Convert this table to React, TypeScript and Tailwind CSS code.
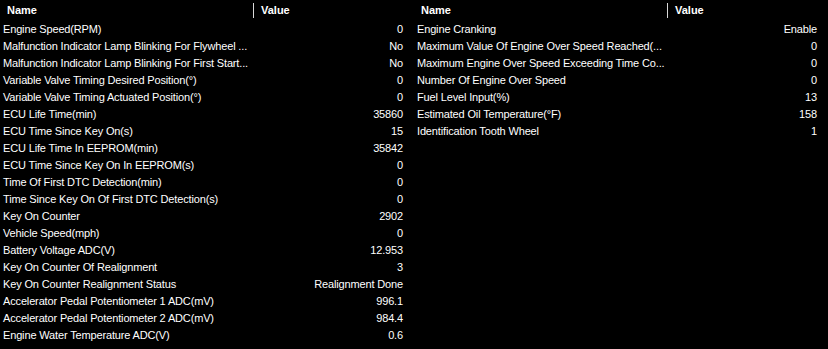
const leftRows: [string, string][] = [
  ["Engine Speed(RPM)", "0"],
  ["Malfunction Indicator Lamp Blinking For Flywheel ...", "No"],
  ["Malfunction Indicator Lamp Blinking For First Start...", "No"],
  ["Variable Valve Timing Desired Position(°)", "0"],
  ["Variable Valve Timing Actuated Position(°)", "0"],
  ["ECU Life Time(min)", "35860"],
  ["ECU Time Since Key On(s)", "15"],
  ["ECU Life Time In EEPROM(min)", "35842"],
  ["ECU Time Since Key On In EEPROM(s)", "0"],
  ["Time Of First DTC Detection(min)", "0"],
  ["Time Since Key On Of First DTC Detection(s)", "0"],
  ["Key On Counter", "2902"],
  ["Vehicle Speed(mph)", "0"],
  ["Battery Voltage ADC(V)", "12.953"],
  ["Key On Counter Of Realignment", "3"],
  ["Key On Counter Realignment Status", "Realignment Done"],
  ["Accelerator Pedal Potentiometer 1 ADC(mV)", "996.1"],
  ["Accelerator Pedal Potentiometer 2 ADC(mV)", "984.4"],
  ["Engine Water Temperature ADC(V)", "0.6"],
];

const rightRows: [string, string][] = [
  ["Engine Cranking", "Enable"],
  ["Maximum Value Of Engine Over Speed Reached(...", "0"],
  ["Maximum Engine Over Speed Exceeding Time Co...", "0"],
  ["Number Of Engine Over Speed", "0"],
  ["Fuel Level Input(%)", "13"],
  ["Estimated Oil Temperature(°F)", "158"],
  ["Identification Tooth Wheel", "1"],
];

const DataTable = ({ rows }: { rows: [string, string][] }) => {
  return (
    <div className="w-[414px] flex flex-col">
      <div className="h-[21px] flex items-center font-bold text-[11px] tracking-normal">
        <div className="w-[254px] pl-[7px] flex items-center justify-between h-full">
          <span>Name</span>
          <div className="w-px h-[15px] bg-[#d8d8d8]" />
        </div>
        <div className="pl-[7px]">Value</div>
      </div>
      {rows.map(([name, value], i) => (
        <div key={i} className="h-[17px] flex items-center">
          <div className="w-[254px] shrink-0 pl-[3px] whitespace-nowrap">{name}</div>
          <div className="flex-1 text-right pr-[11px] whitespace-nowrap">{value}</div>
        </div>
      ))}
    </div>
  );
};

const App = () => {
  return (
    <div
      className="w-[828px] h-[349px] bg-black text-white flex text-[11px] tracking-[-0.15px] overflow-hidden"
      style={{ fontFamily: '"Liberation Sans", Arial, sans-serif' }}
    >
      <DataTable rows={leftRows} />
      <DataTable rows={rightRows} />
    </div>
  );
};

export default App;
